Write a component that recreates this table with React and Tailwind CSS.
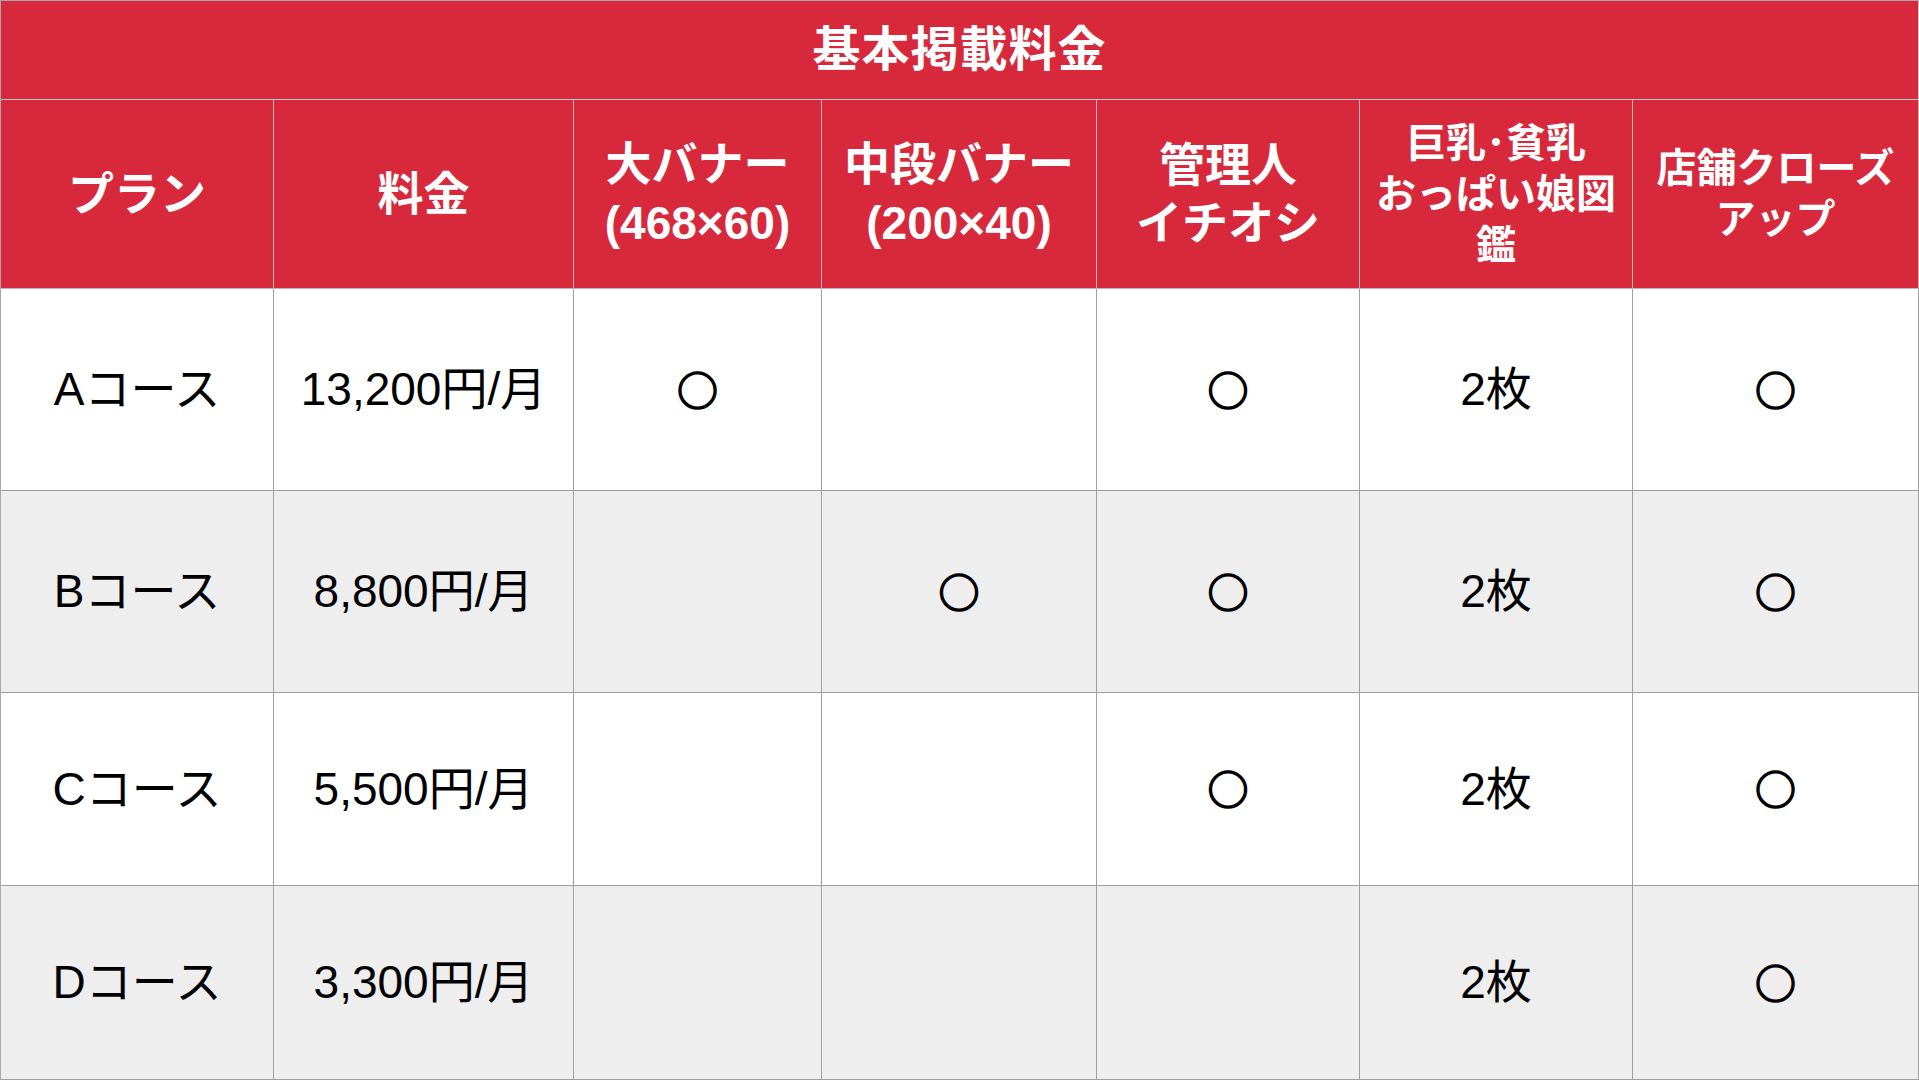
const font = { fontFamily: '"Liberation Sans", "Noto Sans CJK JP", sans-serif' };
const cjk = { fontFamily: '"Noto Sans CJK JP", sans-serif' };

const headers = [
  { lines: ["プラン"], cls: "text-[46px] leading-[58px]" },
  { lines: ["料金"], cls: "text-[46px] leading-[58px]" },
  { lines: ["大バナー", "(468×60)"], cls: "text-[46px] leading-[59px]" },
  { lines: ["中段バナー", "(200×40)"], cls: "text-[46px] leading-[59px]" },
  { lines: ["管理人", "イチオシ"], cls: "text-[46px] leading-[58px]" },
  { lines: ["巨乳･貧乳", "おっぱい娘図", "鑑"], cls: "text-[40px] leading-[51px]" },
  { lines: ["店舗クローズ", "アップ"], cls: "text-[40px] leading-[51px]" },
];

const rows = [
  { h: "h-[202px]", bg: "bg-white", cells: ["Aコース", "13,200円/月", "○", "", "○", "2枚", "○"] },
  { h: "h-[202px]", bg: "bg-[#eeeeee]", cells: ["Bコース", "8,800円/月", "", "○", "○", "2枚", "○"] },
  { h: "h-[193px]", bg: "bg-white", cells: ["Cコース", "5,500円/月", "", "", "○", "2枚", "○"] },
  { h: "h-[194px]", bg: "bg-[#eeeeee]", cells: ["Dコース", "3,300円/月", "", "", "", "2枚", "○"] },
];

function Cell({ value }) {
  if (value === "○") {
    return (
      <span
        className="text-[41px] font-bold leading-none mb-[3px] [-webkit-text-stroke:1.5px_#000]"
        style={cjk}
      >
        ○
      </span>
    );
  }
  return <span>{value}</span>;
}

export default function App() {
  return (
    <div className="w-[1919px] h-[1080px] overflow-hidden bg-white" style={font}>
      <div className="grid grid-cols-[273px_300px_248px_275px_263px_273px_286px] border-t border-l border-[#a8a8a8]">
        <div className="col-span-7 h-[99px] bg-[#d7293b] border-b border-r border-[#c9c9c9] flex items-center justify-center">
          <span className="text-white font-bold text-[48px] tracking-[1px]">基本掲載料金</span>
        </div>
        {headers.map((hd, i) => (
          <div
            key={i}
            className="h-[189px] bg-[#d7293b] border-r border-b border-[#b8b8b8] flex flex-col items-center justify-center text-white font-bold text-center"
          >
            {hd.lines.map((l, j) => (
              <div key={j} className={hd.cls}>{l}</div>
            ))}
          </div>
        ))}
        {rows.map((r, ri) =>
          r.cells.map((c, ci) => (
            <div
              key={ri + "-" + ci}
              className={`${r.h} ${r.bg} border-r border-b border-[#a0a0a0] flex items-center justify-center text-black text-[46px]`}
            >
              <Cell value={c} />
            </div>
          ))
        )}
      </div>
    </div>
  );
}
